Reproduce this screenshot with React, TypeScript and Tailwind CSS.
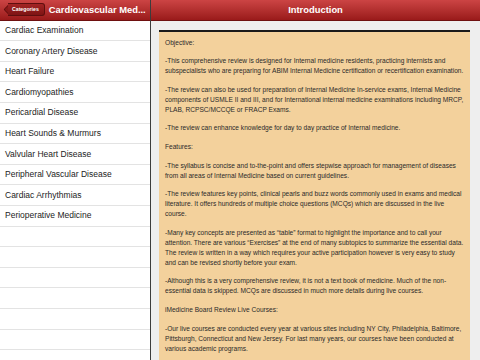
const topics = [
  'Cardiac Examination',
  'Coronary Artery Disease',
  'Heart Failure',
  'Cardiomyopathies',
  'Pericardial Disease',
  'Heart Sounds & Murmurs',
  'Valvular Heart Disease',
  'Peripheral Vascular Disease',
  'Cardiac Arrhythmias',
  'Perioperative Medicine',
  '', '', '', '', '', '', '',
];

const paragraphs = [
  'Objective:',
  '-This comprehensive review is designed for Internal medicine residents, practicing internists and subspecialists who are preparing for ABIM Internal Medicine certification or recertification examination.',
  '-The review can also be used for preparation of Internal Medicine In-service exams, Internal Medicine components of USMLE II and III, and for International internal medicine examinations including MRCP, PLAB, RCPSC/MCCQE or FRACP Exams.',
  '-The review can enhance knowledge for day to day practice of Internal medicine.',
  'Features:',
  '-The syllabus is concise and to-the-point and offers stepwise approach for management of diseases from all areas of Internal Medicine based on current guidelines.',
  '-The review features key points, clinical pearls and buzz words commonly used in exams and medical literature. It offers hundreds of multiple choice questions (MCQs) which are discussed in the live course.',
  '-Many key concepts are presented as \u201ctable\u201d format to highlight the importance and to call your attention. There are various \u201cExercises\u201d at the end of many subtopics to summarize the essential data. The review is written in a way which requires your active participation however is very easy to study and can be revised shortly before your exam.',
  '-Although this is a very comprehensive review, it is not a text book of medicine. Much of the non-essential data is skipped. MCQs are discussed in much more details during live courses.',
  'iMedicine Board Review Live Courses:',
  '-Our live courses are conducted every year at various sites including NY City, Philadelphia, Baltimore, Pittsburgh, Connecticut and New Jersey. For last many years, our courses have been conducted at various academic programs.',
];

function BackButton() {
  return (
    <div className="relative h-[13px] ml-[3px] flex items-center">
      {/* pointed left edge */}
      <div className="absolute left-[2px] top-[2px] w-[9px] h-[9px] rotate-45 rounded-[2px] bg-[#8a1717] border-l border-b border-[#5e0e0e]" />
      <div className="relative ml-[5px] h-[13px] pl-[4px] pr-[5px] flex items-center rounded-r-[3px] bg-linear-to-b from-[#a32424] to-[#7e1414] border border-l-0 border-[#5e0e0e]">
        <span className="text-[5.2px] font-bold text-white leading-none">Categories</span>
      </div>
    </div>
  );
}

export default function App() {
  return (
    <div className="w-[480px] h-[360px] flex overflow-hidden bg-white font-['Liberation_Sans',Arial,sans-serif]">
      {/* Left list */}
      <div className="w-[151px] shrink-0 flex flex-col border-r border-[#3c3c3c]">
        <div className="h-[20.6px] shrink-0 flex items-center gap-[4px] bg-linear-to-b from-[#cc4444] to-[#9a1a1a] border-b border-[#6e1010]">
          <BackButton />
          <span className="text-[9.4px] font-bold text-white whitespace-nowrap">Cardiovascular Med...</span>
        </div>
        <ul>
          {topics.map((t, i) => (
            <li
              key={i}
              className="h-[20.6px] flex items-center pl-[5px] border-b border-[#e3e3e3] text-[8.5px] text-[#1c1c1c] whitespace-nowrap"
            >
              {t}
            </li>
          ))}
        </ul>
      </div>

      {/* Detail pane */}
      <div className="flex-1 flex flex-col bg-[#eeeeee]">
        <div className="h-[20.6px] shrink-0 flex items-center justify-center bg-linear-to-b from-[#cc4444] to-[#9a1a1a] border-b border-[#6e1010]">
          <span className="text-[9.4px] font-bold text-white">Introduction</span>
        </div>
        <div className="pt-[9px] pl-[8px] pr-[10px] overflow-hidden">
          <div className="bg-[#f3d19c] border-t-2 border-[#1a1a1a] pl-[6px] pr-[4px] pt-[6px] pb-[10px] flex flex-col gap-[8.8px] text-[6.6px] leading-[9.9px] text-[#2a2a2a]">
            {paragraphs.map((p, i) => (
              <p key={i}>{p}</p>
            ))}
          </div>
        </div>
      </div>
    </div>
  );
}
